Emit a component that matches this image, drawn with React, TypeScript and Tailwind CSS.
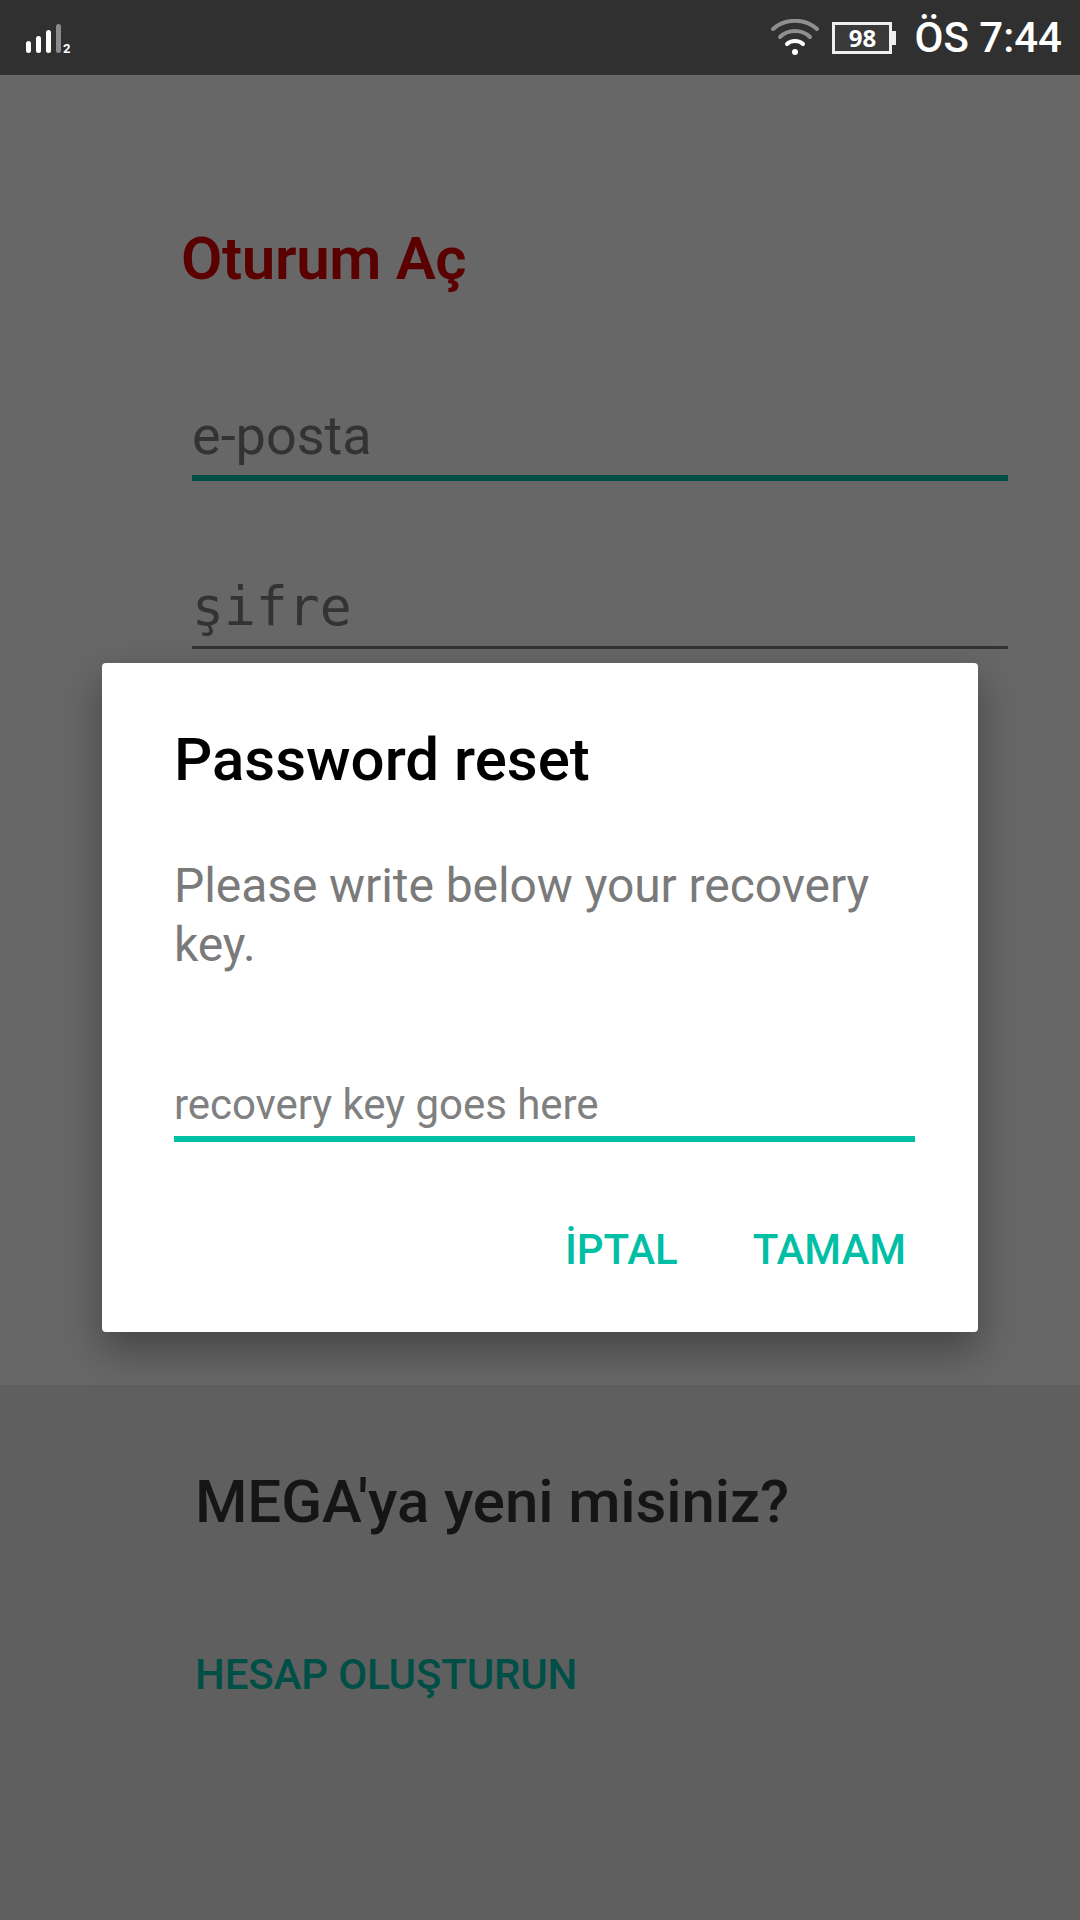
export default function App() {
  return (
    <div className="relative w-[1080px] h-[1920px] overflow-hidden flex flex-col bg-[#676767] font-['Roboto',sans-serif]">
      <div className="h-[75px] shrink-0 bg-[#303030] flex items-center justify-between text-white">
        <svg width="60" height="40" viewBox="0 0 60 40" className="ml-[20px] mt-[4px]">
          <g fill="#fff">
            <rect x="6" y="21" width="5" height="12" rx="2.5" />
            <rect x="16" y="16" width="5" height="17" rx="2.5" />
            <rect x="26" y="10" width="5" height="23" rx="2.5" />
          </g>
          <rect x="36" y="4" width="5" height="29" rx="2.5" fill="#8a8a8a" />
          <text x="43" y="33" fontSize="13" fontWeight="700" fill="#fff" fontFamily="Roboto">2</text>
        </svg>
        <div className="flex items-center">
          <svg width="48" height="38" viewBox="0 0 48 38" className="mr-[13px]">
            <g fill="none" strokeLinecap="round" strokeWidth="4">
              <path d="M2 10 C14 -1 34 -1 46 10" stroke="#8f8f8f" />
              <path d="M9 18 C17 10 31 10 39 18" stroke="#8f8f8f" />
              <path d="M16 25 C20 21 28 21 32 25" stroke="#fff" />
            </g>
            <circle cx="24" cy="33" r="3" fill="#fff" />
          </svg>
          <div className="relative w-[60px] h-[32px] pl-[2px] border-[3px] border-[#efefef] bg-[#3a3a3a] flex items-center justify-center">
            <span className="text-[24px] leading-none font-bold font-['Open_Sans',sans-serif]">98</span>
          </div>
          <div className="w-[4px] h-[14px] bg-[#efefef] mr-[19px]" />
          <span className="text-[42px] leading-none font-medium mr-[18px]">ÖS 7:44</span>
        </div>
      </div>

      <div className="h-[1310px] shrink-0 pt-[152px] pl-[181px]">
        <h1 className="text-[60px] leading-[64px] font-semibold tracking-[-0.35px] text-[#5a0000]">Oturum Aç</h1>
        <div className="w-[816px] ml-[11px] mt-[119px] h-[71px] border-b-[6px] border-[#004f47] text-[54px] leading-[51px] text-[#333333]">e-posta</div>
        <div className="w-[816px] ml-[11px] mt-[103px] h-[65px] border-b-[3px] border-[#333333] text-[53px] leading-[45px] text-[#333333] font-['DejaVu_Sans_Mono',monospace]">şifre</div>
      </div>

      <div className="flex-1 bg-[#5f5f5f] pl-[195px] pt-[82px]">
        <div className="text-[60px] leading-[70px] font-medium tracking-[-0.1px] text-[#151515]">MEGA'ya yeni misiniz?</div>
        <div className="mt-[113px] text-[42px] leading-[50px] font-medium tracking-[-0.15px] text-[#004f47]">HESAP OLUŞTURUN</div>
      </div>

      <div className="absolute left-[102px] top-[663px] w-[876px] h-[669px] bg-white rounded-[4px] shadow-[0_18px_40px_rgba(0,0,0,0.34)] pt-[61px] px-[72px]">
        <div className="text-[60px] leading-[72px] font-medium text-black">Password reset</div>
        <div className="mt-[60px] text-[48px] leading-[59px] tracking-[-0.08px] text-[#7a7a7a]">Please write below your recovery key.</div>
        <div className="mt-[106px] w-[741px] h-[62px] border-b-[6px] border-[#00bfa5] text-[42px] leading-[50px] tracking-[-0.05px] text-[#808080]">recovery key goes here</div>
        <div className="mt-[83px] flex justify-end gap-[75px] text-[42px] leading-[50px] font-medium text-[#00bfa5]">
          <span>İPTAL</span>
          <span>TAMAM</span>
        </div>
      </div>
    </div>
  );
}
